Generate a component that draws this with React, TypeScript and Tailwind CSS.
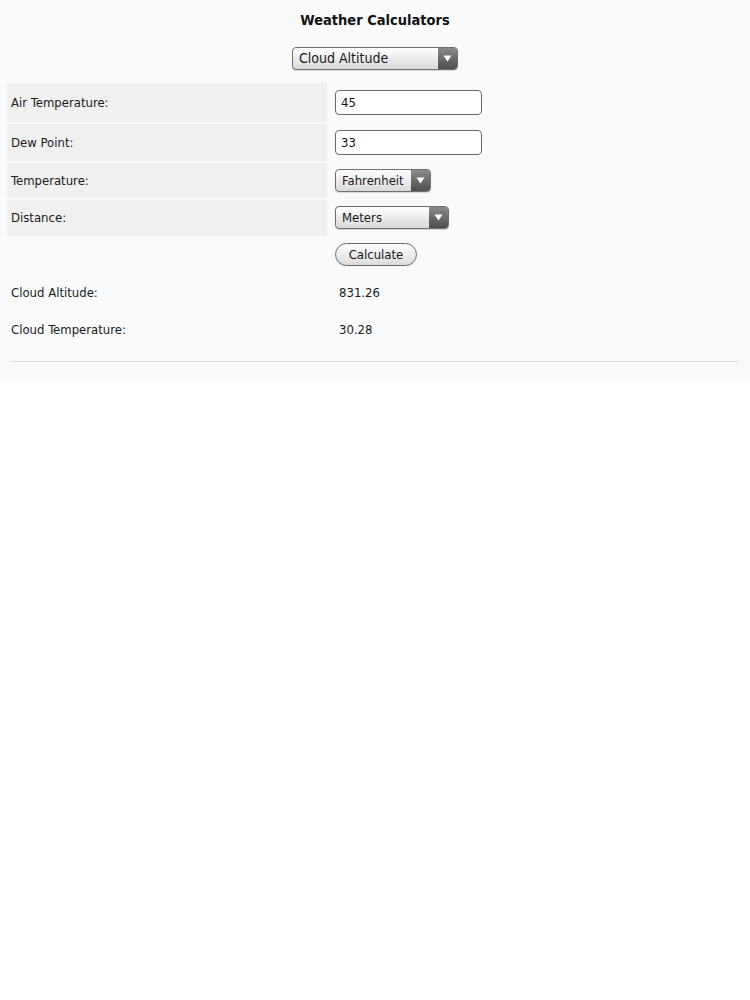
import React from "react";

const font = { fontFamily: '"DejaVu Sans Condensed", "DejaVu Sans", sans-serif' };

function FakeSelect({ label, width, text = "text-[13px]" }: { label: string; width: string; text?: string }) {
  return (
    <div
      className={`flex h-[23px] ${width} items-stretch overflow-hidden rounded-[4px] border border-[#6f6f6f] bg-gradient-to-b from-[#ffffff] to-[#d9d9d9] shadow-[0_1px_1px_rgba(0,0,0,0.15)]`}
    >
      <div className={`flex flex-1 items-center pl-[6px] ${text} text-[#1a1a1a]`}>{label}</div>
      <div className="flex w-[19px] items-center justify-center bg-gradient-to-b from-[#8a8a8a] to-[#4e4e4e]">
        <svg width="9" height="7" viewBox="0 0 9 7">
          <path d="M0.5 0.5 L8.5 0.5 L4.5 6.5 Z" fill="#ffffff" />
        </svg>
      </div>
    </div>
  );
}

function Row({ label, children, h }: { label: string; children: React.ReactNode; h: string }) {
  return (
    <div className={`flex ${h}`}>
      <div className="flex w-[320px] items-center bg-[#f0f0f0] pl-[4px] text-[13px] text-[#1a1a1a]">{label}</div>
      <div className="flex flex-1 items-center pl-[8px]">{children}</div>
    </div>
  );
}

export default function App() {
  return (
    <div style={font} className="min-h-[1000px] bg-white">
      <div className="bg-[#f9fafc] pb-[21px]">
        <div className="pt-[10px] text-center text-[14.5px] font-bold text-[#111]">Weather Calculators</div>
        <div className="mt-[15px] flex justify-center">
          <FakeSelect label="Cloud Altitude" width="w-[166px]" text="text-[14px]" />
        </div>
        <div className="mt-[13px] flex flex-col gap-[2px] px-[7px]">
          <Row label="Air Temperature:" h="h-[39px]">
            <input
              readOnly
              value="45"
              className="h-[25px] w-[147px] rounded-[4px] border border-[#6b6b6b] bg-white px-[5px] text-[13px] text-[#111] outline-none"
              style={font}
            />
          </Row>
          <Row label="Dew Point:" h="h-[37px]">
            <input
              readOnly
              value="33"
              className="h-[25px] w-[147px] rounded-[4px] border border-[#6b6b6b] bg-white px-[5px] text-[13px] text-[#111] outline-none"
              style={font}
            />
          </Row>
          <Row label="Temperature:" h="h-[35px]">
            <FakeSelect label="Fahrenheit" width="w-[96px]" />
          </Row>
          <Row label="Distance:" h="h-[36px]">
            <FakeSelect label="Meters" width="w-[114px]" />
          </Row>
        </div>
        <div className="mt-[7px] flex pl-[335px]">
          <button
            style={font}
            className="h-[23px] w-[82px] rounded-full border border-[#6b6b6b] bg-gradient-to-b from-[#ffffff] to-[#dcdcdc] text-[13px] text-[#1a1a1a]"
          >
            Calculate
          </button>
        </div>
        <div className="mt-[16px] flex h-[22px] items-center px-[11px] text-[13px] text-[#1a1a1a]">
          <div className="w-[328px]">Cloud Altitude:</div>
          <div>831.26</div>
        </div>
        <div className="mt-[15px] flex h-[22px] items-center px-[11px] text-[13px] text-[#1a1a1a]">
          <div className="w-[328px]">Cloud Temperature:</div>
          <div>30.28</div>
        </div>
        <div className="mx-[11px] mt-[20px] h-px bg-[#d9d9d9]" />
      </div>
    </div>
  );
}
